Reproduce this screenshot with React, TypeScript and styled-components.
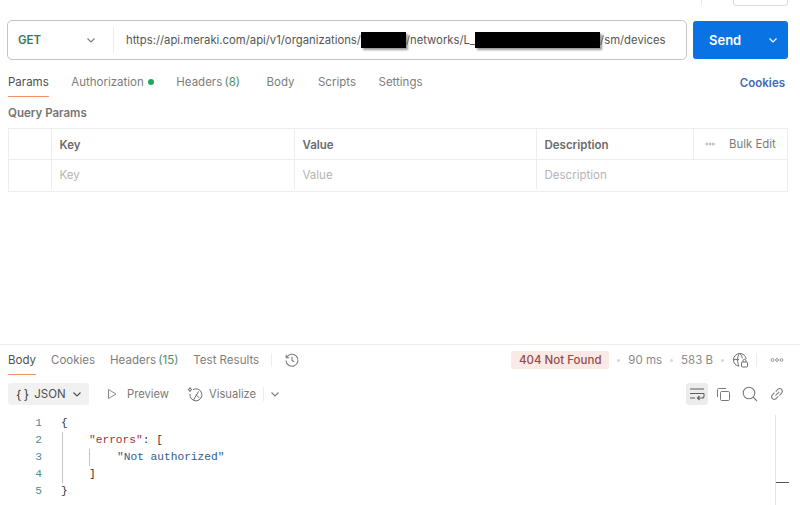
import React from "react";
import styled, { createGlobalStyle } from "styled-components";

const Global = createGlobalStyle`
  html, body { margin: 0; padding: 0; background: #fff; }
  body { font-family: Inter, "Noto Sans", sans-serif; color: #6b6b6b; overflow: hidden; }
  * { box-sizing: border-box; }
`;

const Page = styled.div`
  width: 800px;
  height: 505px;
  display: flex;
  flex-direction: column;
  overflow: hidden;
  background: #fff;
`;

const TopStrip = styled.div`
  height: 20px;
  display: flex;
  justify-content: flex-end;
  align-items: flex-start;
  padding-right: 12px;
  gap: 31px;
`;
const GhostDivider = styled.div`
  width: 1px;
  height: 5px;
  background: #e6e6e6;
`;
const GhostButton = styled.div`
  width: 55px;
  height: 6px;
  border: 1px solid #dcdcdc;
  border-top: none;
  border-radius: 0 0 4px 4px;
`;

const RequestBar = styled.div`
  display: flex;
  height: 40px;
  padding: 0 12px 0 7px;
  gap: 6px;
`;
const UrlBox = styled.div`
  flex: 1;
  display: flex;
  align-items: center;
  border: 1px solid #c4c4c4;
  border-radius: 5px;
  height: 40px;
`;
const Method = styled.div`
  width: 106px;
  height: 26px;
  padding: 0 16px 0 10px;
  display: flex;
  align-items: center;
  justify-content: space-between;
  color: #38795a;
  font-size: 11.5px;
  font-weight: 600;
  border-right: 1px solid #ececec;
  svg { color: #7b7b7b; }
`;
const Url = styled.div`
  margin-left: 12px;
  font-size: 11.3px;
  color: #555;
  white-space: nowrap;
  display: flex;
  align-items: center;
`;
const Redaction = styled.span<{ $w: number }>`
  display: inline-block;
  width: ${(p) => p.$w}px;
  height: 16px;
  background: #000;
  box-shadow: 2px 2px 2px rgba(0, 0, 0, 0.4);
`;
const SendButton = styled.div`
  width: 95px;
  height: 38px;
  margin-top: 1px;
  background: #0a73e4;
  border-radius: 3px;
  color: #fff;
  font-size: 13px;
  font-weight: 600;
  display: flex;
  align-items: center;
  padding: 0 9px 0 16px;
  justify-content: space-between;
`;

const TabRow = styled.div`
  display: flex;
  align-items: center;
  justify-content: space-between;
  height: 37px;
  padding: 0 15px 0 8px;
`;
const Tabs = styled.div<{ $gap: number }>`
  display: flex;
  align-items: stretch;
  height: 100%;
  gap: ${(p) => p.$gap}px;
`;
const Tab = styled.div<{ $active?: boolean; $top?: number; $after?: number }>`
  display: flex;
  align-items: center;
  gap: 4px;
  font-size: 11.5px;
  white-space: nowrap;
  padding-top: ${(p) => p.$top ?? 0}px;
  margin-right: ${(p) => p.$after ?? 0}px;
  color: ${(p) => (p.$active ? "#505050" : "#7d7d7d")};
  border-bottom: 1px solid ${(p) => (p.$active ? "#f0916a" : "transparent")};
`;
const Count = styled.span`
  color: #4f8c69;
  margin-left: -1px;
`;
const Dot = styled.span`
  width: 6px;
  height: 6px;
  border-radius: 50%;
  background: #1fa95c;
`;
const CookiesLink = styled.div`
  font-size: 11.5px;
  font-weight: 600;
  padding-top: 8px;
  color: #3f6bb5;
`;
const SectionTitle = styled.div`
  padding-left: 8px;
  margin-top: 9px;
  font-size: 11.5px;
  font-weight: 600;
  color: #747474;
  height: 15px;
  line-height: 15px;
`;

const Table = styled.div`
  margin: 7px 12px 0 8px;
  border: 1px solid #ededed;
  height: 64px;
  display: flex;
  flex-direction: column;
`;
const TableRow = styled.div<{ $h: number; $top?: boolean }>`
  height: ${(p) => p.$h}px;
  display: grid;
  grid-template-columns: 42px 243px 242px 157px 1fr;
  ${(p) => (p.$top ? "border-top: 1px solid #ededed; padding-bottom: 2px;" : "")}
`;
const Cell = styled.div<{ $head?: boolean; $noBorder?: boolean }>`
  border-left: ${(p) => (p.$noBorder ? "none" : "1px solid #ededed")};
  display: flex;
  align-items: center;
  padding-left: 7.5px;
  padding-top: ${(p) => (p.$head ? 1 : 0)}px;
  font-size: 11.5px;
  font-weight: ${(p) => (p.$head ? 600 : 400)};
  color: ${(p) => (p.$head ? "#6b6b6b" : "#b4b4b4")};
`;
const BulkCell = styled.div`
  border-left: 1px solid #ededed;
  display: flex;
  align-items: center;
  gap: 14px;
  padding-left: 11px;
  font-size: 11.4px;
  color: #7a7a7a;
  white-space: nowrap;
`;

const Spacer = styled.div`
  flex: 1;
`;

const ResponsePanel = styled.div`
  height: 161px;
  border-top: 1px solid #ececec;
  display: flex;
  flex-direction: column;
`;
const ResponseTabs = styled.div`
  height: 30px;
  display: flex;
  align-items: stretch;
  justify-content: space-between;
  padding: 0 16px 0 8px;
`;
const HistoryIcon = styled.div`
  display: flex;
  align-items: center;
  gap: 12px;
  margin-left: -3px;
`;
const VDivider = styled.span`
  width: 1px;
  height: 14px;
  background: #ececec;
`;
const StatusGroup = styled.div`
  display: flex;
  align-items: center;
  font-size: 11.5px;
  color: #8a8a8a;
  gap: 8px;
`;
const StatusBadge = styled.span`
  background: #fbe9e5;
  color: #944c4c;
  border-radius: 2px;
  width: 98px;
  text-align: center;
  height: 18px;
  line-height: 18px;
  font-weight: 500;
  white-space: nowrap;
`;
const Sep = styled.span`
  width: 3px;
  height: 3px;
  border-radius: 50%;
  background: #d6d6d6;
`;
const MoreSlot = styled.span`
  display: flex;
  margin-left: 5px;
`;
const Toolbar = styled.div`
  height: 32px;
  margin-top: 8px;
  display: flex;
  align-items: flex-start;
  padding: 0 12px 0 8px;
  font-size: 11.2px;
  color: #7a7a7a;
`;
const JsonButton = styled.div`
  width: 81px;
  height: 22px;
  background: #f1f1f1;
  border-radius: 3px;
  display: flex;
  align-items: center;
  padding-left: 8px;
  gap: 5px;
  font-size: 11.5px;
  color: #4f4f4f;
`;
const Braces = styled.span`
  font-size: 12.5px;
  word-spacing: -1px;
  color: #3d3d3d;
`;
const ToolItem = styled.div<{ $ml: number; $gap: number }>`
  display: flex;
  align-items: center;
  gap: ${(p) => p.$gap}px;
  height: 22px;
  margin-left: ${(p) => p.$ml}px;
  white-space: nowrap;
`;
const ToolGroup = styled.div`
  display: flex;
  align-items: center;
  gap: 4.7px;
`;
const ToolIcon = styled.div<{ $active?: boolean }>`
  width: 22px;
  height: 22px;
  display: flex;
  align-items: center;
  justify-content: center;
  border-radius: 3px;
  background: ${(p) => (p.$active ? "#ececec" : "transparent")};
  color: #7a7a7a;
`;

const Editor = styled.div`
  flex: 1;
  display: flex;
  min-height: 0;
`;
const Code = styled.div`
  flex: 1;
  font-family: "Liberation Mono", "DejaVu Sans Mono", monospace;
  font-size: 11.2px;
  line-height: 17px;
`;
const Line = styled.div`
  display: flex;
  height: 17px;
  white-space: pre;
`;
const LineNo = styled.span`
  width: 42px;
  text-align: right;
  color: #4f8a8f;
`;
const Content = styled.span`
  position: relative;
  margin-left: 19px;
  color: #333;
`;
const Indent = styled.span<{ $w: number }>`
  display: inline-block;
  width: ${(p) => p.$w}px;
`;
const Guide = styled.span<{ $x: number }>`
  position: absolute;
  left: ${(p) => p.$x}px;
  top: 0;
  bottom: 0;
  width: 1px;
  background: #c4c4c4;
`;
const Key = styled.span`
  color: #a0333f;
`;
const Str = styled.span`
  color: #2c5c8f;
`;
const Minimap = styled.div`
  width: 14px;
  margin-right: 11px;
  border-left: 1px solid #e4e4e4;
  padding-top: 67px;
`;
const MiniMark = styled.div`
  height: 1px;
  width: 13px;
  background: #555;
`;

const Chevron = ({ size = 12 }: { size?: number }) => (
  <svg width={size} height={size} viewBox="0 0 12 12" fill="none" stroke="currentColor" strokeWidth="1.1">
    <path d="M2.5 4.500 6 8l3.500-3.500" />
  </svg>
);

const Ellipsis = ({ width = 14 }: { width?: number }) => (
  <svg width={width} height="4" viewBox="0 0 14 4" fill="none" stroke="#8a8a8a" strokeWidth="0.9">
    <circle cx="2.500" cy="2" r="1.400" />
    <circle cx="7" cy="2" r="1.400" />
    <circle cx="11.500" cy="2" r="1.400" />
  </svg>
);

const History = () => (
  <svg width="16" height="16" viewBox="0 0 16 16" fill="none" stroke="#7a7a7a" strokeWidth="1.100">
    <path d="M2.600 5.600A6 6 0 1 1 2 8.500" />
    <path d="M2.200 2.800v3h3" />
    <path d="M8 4.800V8.400l2.200 1.400" />
  </svg>
);

const GlobeLock = () => (
  <svg width="16" height="16" viewBox="0 0 16 16" fill="none" stroke="#6f6f6f" strokeWidth="1">
    <path d="M7 14.200A6.400 6.400 0 1 1 14.200 7" />
    <path d="M1 7.600h6M7.400 1.400C5 5 5 10 7 14M7.800 1.400c1.600 1.700 2.400 3.400 2.600 5" />
    <rect x="9.500" y="10" width="6" height="5" rx="1" />
    <path d="M11 10V8.800a1.500 1.500 0 0 1 3 0V10" />
  </svg>
);

const Play = () => (
  <svg width="12" height="12" viewBox="0 0 12 12" fill="none" stroke="#8a8a8a" strokeWidth="1">
    <path d="M2.500 1.500v9l7.500-4.500z" />
  </svg>
);

const Visualize = () => (
  <svg width="17" height="17" viewBox="0 0 17 17" fill="none" stroke="#6f6f6f" strokeWidth="1">
    <path d="M6 3.600A6 6 0 1 1 3 8" />
    <path d="M6.500 14 11.500 5.500M9 8.600l3.500 3.600" />
    <path d="M3 1.500 3.600 3l1.500.6-1.500.6L3 5.700 2.400 4.200.9 3.600l1.500-.6z" />
  </svg>
);

const Wrap = () => (
  <svg width="16" height="14" viewBox="0 0 16 14" fill="none" stroke="#5f5f5f" strokeWidth="1.100">
    <path d="M1 2h14M1 6.500h14M1 11h5" />
    <path d="M15 6.500v2.500a2 2 0 0 1-2 2H8.500M10.500 9l-2 2 2 2" />
  </svg>
);

const Copy = () => (
  <svg width="15" height="15" viewBox="0 0 15 15" fill="none" stroke="#7a7a7a" strokeWidth="1">
    <rect x="4.500" y="4.500" width="9" height="9" rx="1.200" />
    <path d="M1.500 10V2.500a1 1 0 0 1 1-1H10" />
  </svg>
);

const Search = () => (
  <svg width="16" height="16" viewBox="0 0 16 16" fill="none" stroke="#7a7a7a" strokeWidth="1.100">
    <circle cx="7" cy="7" r="5.800" />
    <path d="m11.200 11.200 3.800 3.800" />
  </svg>
);

const LinkIcon = () => (
  <svg width="16" height="16" viewBox="0 0 15 15" fill="none" stroke="#7f7f7f" strokeWidth="1">
    <path d="M6 9 9.500 5.500M5.200 6.300 3 8.500a2.500 2.500 0 0 0 3.500 3.500l2.200-2.200M6.300 5.200 8.500 3A2.500 2.500 0 0 1 12 6.500L9.800 8.700" />
  </svg>
);

export default function App() {
  return (
    <Page>
      <Global />
      <TopStrip>
        <GhostDivider />
        <GhostButton />
      </TopStrip>

      <RequestBar>
        <UrlBox>
          <Method>
            GET
            <Chevron />
          </Method>
          <Url>
            https://api.meraki.com/api/v1/organizations/
            <Redaction $w={45} />
            /networks/L_
            <Redaction $w={125} />
            /sm/devices
          </Url>
        </UrlBox>
        <SendButton>
          Send
          <Chevron />
        </SendButton>
      </RequestBar>

      <TabRow>
        <Tabs $gap={22.5}>
          <Tab $active $top={8}>Params</Tab>
          <Tab $top={8}>
            Authorization <Dot />
          </Tab>
          <Tab $top={8} $after={4}>
            <span>
              Headers <Count>(8)</Count>
            </span>
          </Tab>
          <Tab $top={8} $after={1}>Body</Tab>
          <Tab $top={8}>Scripts</Tab>
          <Tab $top={8}>Settings</Tab>
        </Tabs>
        <CookiesLink>Cookies</CookiesLink>
      </TabRow>

      <SectionTitle>Query Params</SectionTitle>

      <Table>
        <TableRow $h={30}>
          <Cell $noBorder />
          <Cell $head>Key</Cell>
          <Cell $head>Value</Cell>
          <Cell $head>Description</Cell>
          <BulkCell>
            <Ellipsis width={10} />
            Bulk Edit
          </BulkCell>
        </TableRow>
        <TableRow $h={32} $top>
          <Cell $noBorder />
          <Cell>Key</Cell>
          <Cell>Value</Cell>
          <Cell>Description</Cell>
          <span />
        </TableRow>
      </Table>

      <Spacer />

      <ResponsePanel>
        <ResponseTabs>
          <Tabs $gap={15}>
            <Tab $active>Body</Tab>
            <Tab>Cookies</Tab>
            <Tab>
              <span>
                Headers <Count>(15)</Count>
              </span>
            </Tab>
            <Tab>Test Results</Tab>
            <HistoryIcon>
              <VDivider />
              <History />
            </HistoryIcon>
          </Tabs>
          <StatusGroup>
            <StatusBadge>404 Not Found</StatusBadge>
            <Sep />
            <span>90 ms</span>
            <Sep />
            <span>583 B</span>
            <Sep />
            <GlobeLock />
            <VDivider />
            <MoreSlot>
              <Ellipsis />
            </MoreSlot>
          </StatusGroup>
        </ResponseTabs>

        <Toolbar>
          <JsonButton>
            <Braces>{"{ }"}</Braces>
            JSON
            <Chevron />
          </JsonButton>
          <ToolItem $ml={17} $gap={9}>
            <Play />
            Preview
          </ToolItem>
          <ToolItem $ml={18} $gap={5}>
            <Visualize />
            Visualize
          </ToolItem>
          <ToolItem $ml={7} $gap={5}>
            <VDivider />
            <Chevron />
          </ToolItem>
          <Spacer />
          <ToolGroup>
            <ToolIcon $active>
              <Wrap />
            </ToolIcon>
            <ToolIcon>
              <Copy />
            </ToolIcon>
            <ToolIcon>
              <Search />
            </ToolIcon>
            <ToolIcon>
              <LinkIcon />
            </ToolIcon>
          </ToolGroup>
        </Toolbar>

        <Editor>
          <Code>
            <Line>
              <LineNo>1</LineNo>
              <Content>{"{"}</Content>
            </Line>
            <Line>
              <LineNo>2</LineNo>
              <Content>
                <Guide $x={1} />
                <Indent $w={28} />
                <Key>"errors"</Key>: [
              </Content>
            </Line>
            <Line>
              <LineNo>3</LineNo>
              <Content>
                <Guide $x={1} />
                <Guide $x={28} />
                <Indent $w={56} />
                <Str>"Not authorized"</Str>
              </Content>
            </Line>
            <Line>
              <LineNo>4</LineNo>
              <Content>
                <Guide $x={1} />
                <Indent $w={28} />]
              </Content>
            </Line>
            <Line>
              <LineNo>5</LineNo>
              <Content>{"}"}</Content>
            </Line>
          </Code>
          <Minimap>
            <MiniMark />
          </Minimap>
        </Editor>
      </ResponsePanel>
    </Page>
  );
}
